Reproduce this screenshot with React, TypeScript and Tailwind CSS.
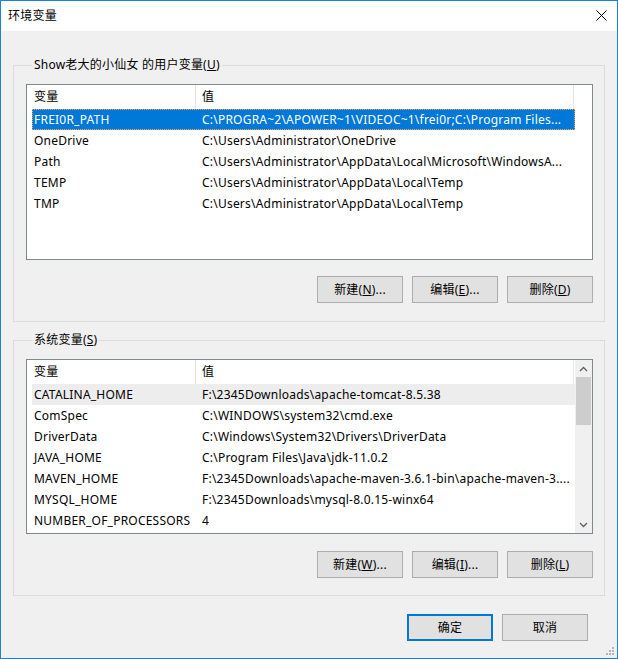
import type { ReactNode } from 'react';

type Row = [string, string];

const USER_VARS: Row[] = [
  ['FREI0R_PATH', 'C:\\PROGRA~2\\APOWER~1\\VIDEOC~1\\frei0r;C:\\Program Files...'],
  ['OneDrive', 'C:\\Users\\Administrator\\OneDrive'],
  ['Path', 'C:\\Users\\Administrator\\AppData\\Local\\Microsoft\\WindowsA...'],
  ['TEMP', 'C:\\Users\\Administrator\\AppData\\Local\\Temp'],
  ['TMP', 'C:\\Users\\Administrator\\AppData\\Local\\Temp'],
];

const SYS_VARS: Row[] = [
  ['CATALINA_HOME', 'F:\\2345Downloads\\apache-tomcat-8.5.38'],
  ['ComSpec', 'C:\\WINDOWS\\system32\\cmd.exe'],
  ['DriverData', 'C:\\Windows\\System32\\Drivers\\DriverData'],
  ['JAVA_HOME', 'C:\\Program Files\\Java\\jdk-11.0.2'],
  ['MAVEN_HOME', 'F:\\2345Downloads\\apache-maven-3.6.1-bin\\apache-maven-3....'],
  ['MYSQL_HOME', 'F:\\2345Downloads\\mysql-8.0.15-winx64'],
  ['NUMBER_OF_PROCESSORS', '4'],
];

function Chevron({ up }: { up?: boolean }) {
  return (
    <svg width="9" height="6" viewBox="0 0 9 6" className="block">
      <path d={up ? 'M1 5 L4.5 1.5 L8 5' : 'M1 1 L4.5 4.5 L8 1'} fill="none" stroke="#606060" strokeWidth="1.3" />
    </svg>
  );
}

function ListView({ rows, selected, hover, scroll, height }: { rows: Row[]; selected?: number; hover?: number; scroll?: boolean; height: string }) {
  return (
    <div className={`mt-[11px] flex border border-[#828790] bg-white ${height}`}>
      <div className="flex-1 overflow-hidden">
        <div className="flex h-[24px]">
          <div className="flex w-[169px] items-center border-r border-[#e5e5e5] pl-[7px]">变量</div>
          <div className="flex w-[378px] items-center border-r border-[#e5e5e5] pl-[6px]">值</div>
        </div>
        {rows.map(([name, value], i) => (
          <div
            key={name}
            className={`ml-[5px] flex h-[21px] w-[543px] items-center leading-[21px] ${
              i === selected
                ? 'bg-[#0078d7] text-white outline-1 outline-dotted outline-[#f5a54a] -outline-offset-1'
                : i === hover
                ? 'bg-[#ededed]'
                : ''
            }`}
          >
            <div className="w-[170px] shrink-0 whitespace-nowrap pl-[2px]">{name}</div>
            <div className="flex-1 overflow-hidden whitespace-nowrap">{value}</div>
          </div>
        ))}
      </div>
      {scroll && (
        <div className="flex w-[17px] flex-col bg-[#f0f0f0]">
          <div className="flex h-[17px] items-center justify-center"><Chevron up /></div>
          <div className="mx-[1px] h-[48px] bg-[#cdcdcd]" />
          <div className="flex-1" />
          <div className="flex h-[17px] items-center justify-center"><Chevron /></div>
        </div>
      )}
    </div>
  );
}

function Btn({ children, primary }: { children: ReactNode; primary?: boolean }) {
  return (
    <button
      className={`flex h-[27px] w-[86px] items-center justify-center bg-[#e1e1e1] ${
        primary ? 'border-2 border-[#0078d7]' : 'border border-[#adadad]'
      }`}
    >
      {children}
    </button>
  );
}

function Group({ title, children, className }: { title: ReactNode; children: ReactNode; className: string }) {
  return (
    <fieldset className={`mx-[12px] border border-[#dcdcdc] pl-[12px] pr-[11px] ${className}`}>
      <legend className="ml-[6px] px-[2px] leading-[16px]">{title}</legend>
      {children}
    </fieldset>
  );
}

export default function App() {
  return (
    <div className="relative flex h-[659px] w-[618px] flex-col border border-[#1883d7] bg-[#f0f0f0] font-['Noto_Sans','Noto_Sans_CJK_SC',sans-serif] text-[12px] tracking-[0.22px] text-black">
      <div className="flex h-[30px] shrink-0 items-center justify-between bg-white pl-[7px] pr-[10px]">
        <span>环境变量</span>
        <svg width="11" height="11" viewBox="0 0 11 11" className="mb-[2px]">
          <path d="M0.5 0.5 L10.5 10.5 M10.5 0.5 L0.5 10.5" stroke="#000" strokeWidth="1" />
        </svg>
      </div>

      <Group title={<>Show老大的小仙女 的用户变量(<u>U</u>)</>} className="mt-[26px] pb-[18px]">
        <ListView rows={USER_VARS} selected={0} height="h-[176px]" />
        <div className="mt-[16px] flex justify-end gap-[9px]">
          <Btn>新建(<u>N</u>)...</Btn>
          <Btn>编辑(<u>E</u>)...</Btn>
          <Btn>删除(<u>D</u>)</Btn>
        </div>
      </Group>

      <Group title={<>系统变量(<u>S</u>)</>} className="mt-[10px] pb-[17px]">
        <ListView rows={SYS_VARS} hover={0} scroll height="h-[175px]" />
        <div className="mt-[17px] flex justify-end gap-[9px]">
          <Btn>新建(<u>W</u>)...</Btn>
          <Btn>编辑(<u>I</u>)...</Btn>
          <Btn>删除(<u>L</u>)</Btn>
        </div>
      </Group>

      <div className="mt-[18px] flex justify-end gap-[9px] pr-[29px]">
        <Btn primary>确定</Btn>
        <Btn>取消</Btn>
      </div>

      <svg width="9" height="9" viewBox="0 0 9 9" className="absolute bottom-[2px] right-[2px]">
        <rect x="6" y="0" width="2" height="2" fill="#b4b4b4" />
        <rect x="3" y="3" width="2" height="2" fill="#b4b4b4" />
        <rect x="6" y="3" width="2" height="2" fill="#b4b4b4" />
        <rect x="0" y="6" width="2" height="2" fill="#b4b4b4" />
        <rect x="3" y="6" width="2" height="2" fill="#b4b4b4" />
        <rect x="6" y="6" width="2" height="2" fill="#b4b4b4" />
      </svg>
    </div>
  );
}
